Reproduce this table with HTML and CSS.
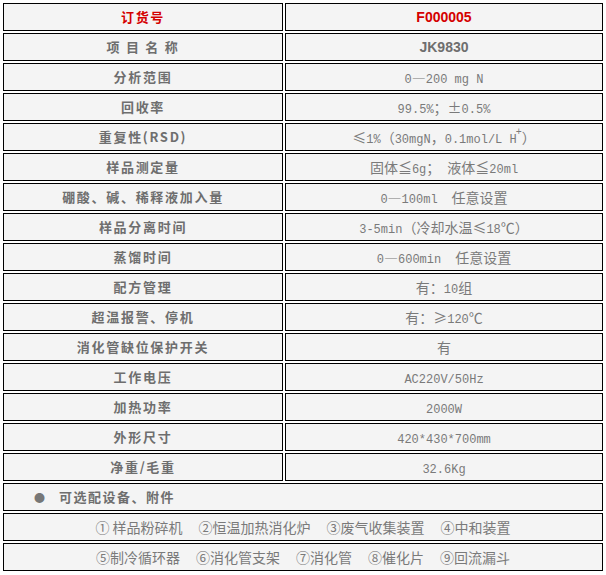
FILE: index.html
```html
<!DOCTYPE html>
<html lang="zh-CN">
<head>
<meta charset="utf-8">
<title>JK9830</title>
<link rel="stylesheet" href="styles.css">
</head>
<body>
<table class="spec">
  <tr><td class="k red">订货号</td><td class="v code red">F000005</td></tr>
  <tr><td class="k">项 目 名 称</td><td class="v code gray">JK9830</td></tr>
  <tr><td class="k">分析范围</td><td class="v"><span class="m">0</span>—<span class="m">200 mg N</span></td></tr>
  <tr><td class="k">回收率</td><td class="v"><span class="m">99.5%</span>；±<span class="m">0.5%</span></td></tr>
  <tr><td class="k">重复性(RSD)</td><td class="v">≤<span class="m">1%</span>（<span class="m">30mgN</span>，<span class="m">0.1mol/L H</span><sup class="sup">+</sup>）</td></tr>
  <tr><td class="k">样品测定量</td><td class="v">固体≦<span class="m">6g</span>；　液体≦<span class="m">20ml</span></td></tr>
  <tr><td class="k">硼酸、碱、稀释液加入量</td><td class="v"><span class="m">0</span>—<span class="m">100ml</span>　任意设置</td></tr>
  <tr><td class="k">样品分离时间</td><td class="v"><span class="m">3-5min</span>（冷却水温≤<span class="m">18</span>℃）</td></tr>
  <tr><td class="k">蒸馏时间</td><td class="v"><span class="m">0</span>—<span class="m">600min</span>　任意设置</td></tr>
  <tr><td class="k">配方管理</td><td class="v">有：<span class="m">10</span>组</td></tr>
  <tr><td class="k">超温报警、停机</td><td class="v">有：≥<span class="m">120</span>℃</td></tr>
  <tr><td class="k">消化管缺位保护开关</td><td class="v">有</td></tr>
  <tr><td class="k">工作电压</td><td class="v"><span class="m">AC220V/50Hz</span></td></tr>
  <tr><td class="k">加热功率</td><td class="v"><span class="m">2000W</span></td></tr>
  <tr><td class="k">外形尺寸</td><td class="v"><span class="m">420*430*700mm</span></td></tr>
  <tr><td class="k">净重/毛重</td><td class="v"><span class="m">32.6Kg</span></td></tr>
  <tr><td class="opt" colspan="2"><span class="dot">●</span><span class="opt-title">可选配设备、附件</span></td></tr>
  <tr><td class="list" colspan="2"><div class="items"><span>①&nbsp;样品粉碎机</span><span>②恒温加热消化炉</span><span>③废气收集装置</span><span>④中和装置</span></div></td></tr>
  <tr><td class="list" colspan="2"><div class="items"><span>⑤制冷循环器</span><span>⑥消化管支架</span><span>⑦消化管</span><span>⑧催化片</span><span>⑨回流漏斗</span></div></td></tr>
</table>
</body>
</html>
```

FILE: styles.css
```css
html, body {
  margin: 0;
  padding: 0;
  background: #ffffff;
}

body {
  padding: 1px;
  font-family: "Noto Sans CJK SC", sans-serif;
  color: #777777;
}

.spec {
  border-collapse: separate;
  border-spacing: 2px;
  width: 604px;
}

.spec td {
  border: 1px solid #000000;
  background: #f4f4f4;
  height: 26px;
  padding: 0;
  line-height: 16px;
  vertical-align: middle;
  white-space: nowrap;
}

.k {
  width: 278px;
  text-align: center;
  font-size: 13px;
  font-weight: 700;
  letter-spacing: 1.7px;
  color: #6e6e6e;
}

.v {
  width: 316px;
  text-align: center;
  font-size: 14px;
  color: #7a7a7a;
}

.m {
  font-family: "Liberation Mono", monospace;
  font-size: 12px;
  line-height: 12px;
}

.sup {
  font-family: "Liberation Mono", monospace;
  font-size: 10px;
  line-height: 0;
  vertical-align: 8px;
  margin-left: -1px;
}

.code {
  font-family: "Liberation Sans", Arial, sans-serif;
  font-weight: 700;
  font-size: 14px;
}

.red {
  color: #d40000;
}

.gray {
  color: #6e6e6e;
}

.opt {
  font-size: 13px;
  font-weight: 700;
  color: #6e6e6e;
  letter-spacing: 1.5px;
}

.dot {
  display: inline-block;
  margin-left: 30px;
  margin-right: 14px;
  font-size: 11px;
  color: #777777;
  letter-spacing: 0;
}

.list {
  font-size: 14px;
  color: #7a7a7a;
}

.items {
  display: flex;
  justify-content: center;
  gap: 16px;
}
```
